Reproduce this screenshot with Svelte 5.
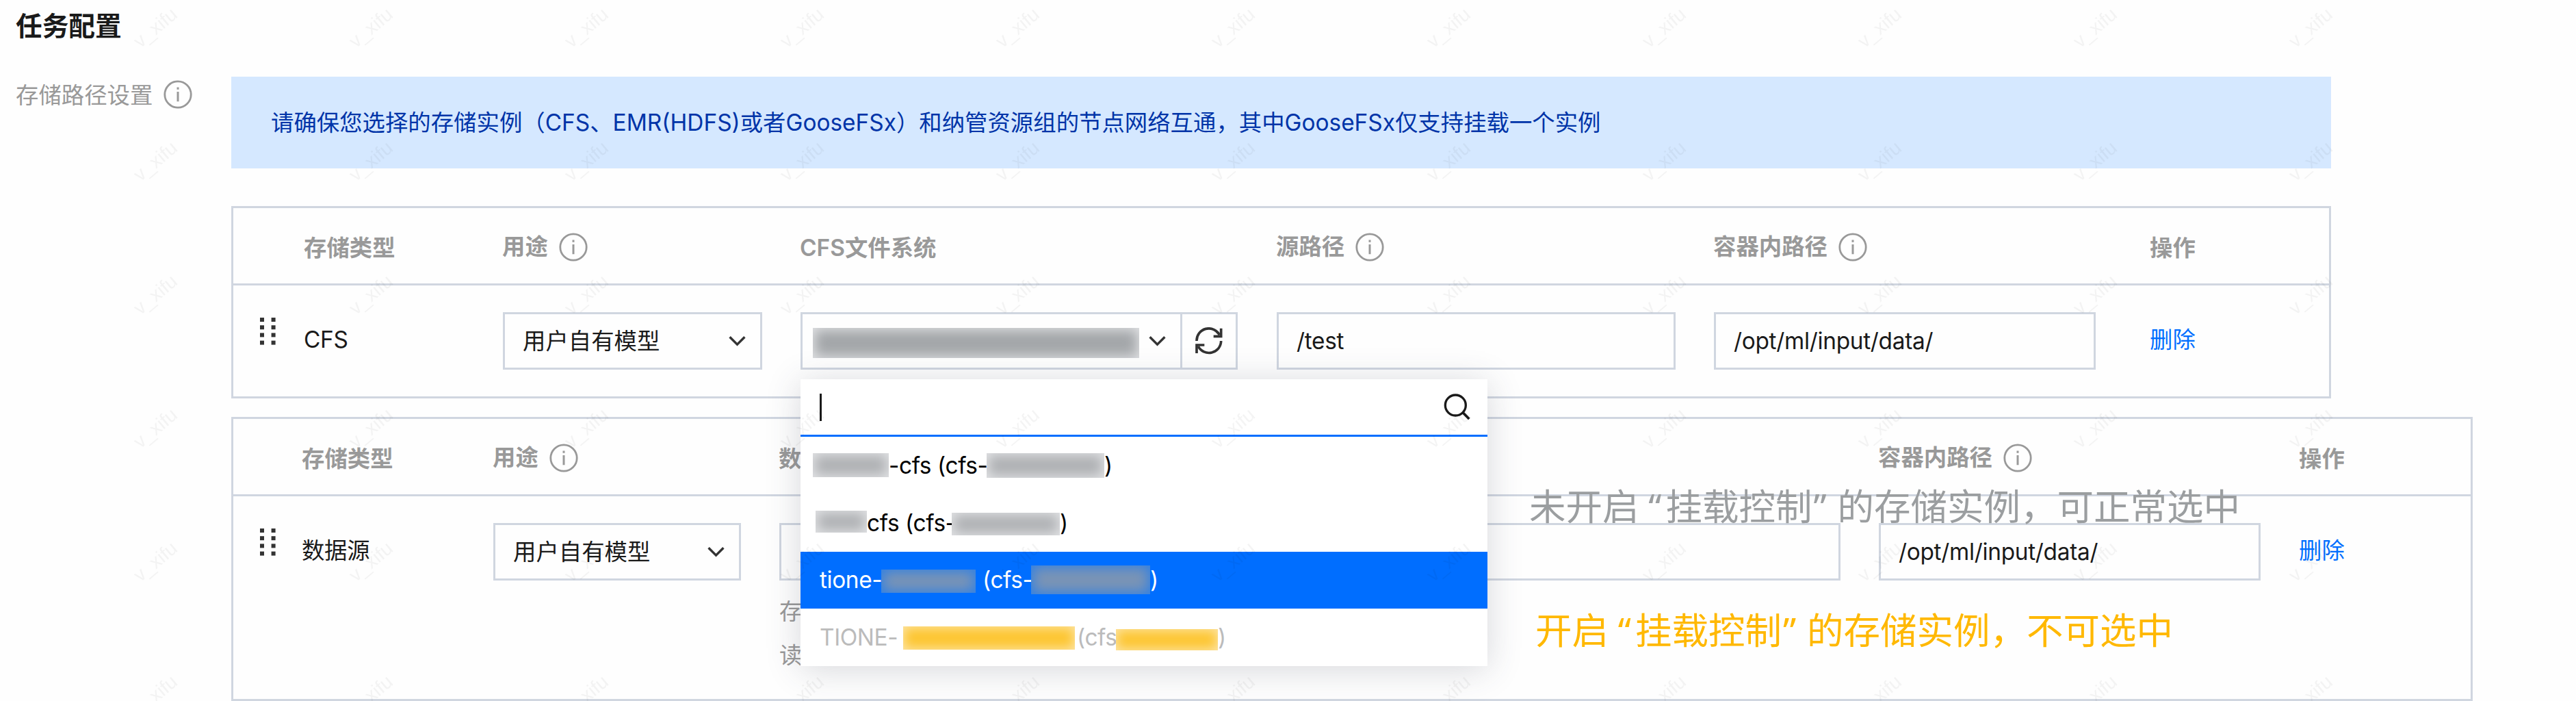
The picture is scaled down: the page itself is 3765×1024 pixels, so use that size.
<script lang="ts">
	interface Column {
		label: string;
		tip?: boolean;
	}

	interface Segment {
		width: number;
		text?: string;
		mask?: 'grey' | 'blue' | 'amber';
		height?: number;
		shift?: number;
	}

	interface Option {
		segments: Segment[];
		active?: boolean;
		disabled?: boolean;
	}

	const cfsColumns: Column[] = [
		{ label: '存储类型' },
		{ label: '用途', tip: true },
		{ label: 'CFS文件系统' },
		{ label: '源路径', tip: true },
		{ label: '容器内路径', tip: true },
		{ label: '操作' }
	];

	const sourceColumns: Column[] = [
		{ label: '存储类型' },
		{ label: '用途', tip: true },
		{ label: '数据源' },
		{ label: '容器内路径', tip: true },
		{ label: '操作' }
	];

	const options: Option[] = [
		{
			segments: [
				{ mask: 'grey', width: 111, height: 35 },
				{ text: '-cfs (cfs-', width: 143 },
				{ mask: 'grey', width: 172, height: 36 },
				{ text: ')', width: 12 }
			]
		},
		{
			segments: [
				{ width: 4 },
				{ mask: 'grey', width: 75, height: 32, shift: -2 },
				{ text: 'cfs (cfs-', width: 124 },
				{ mask: 'grey', width: 158, height: 33, shift: 2 },
				{ text: ')', width: 12 }
			]
		},
		{
			active: true,
			segments: [
				{ width: 10 },
				{ text: 'tione-', width: 90 },
				{ mask: 'blue', width: 138, height: 34, shift: 2 },
				{ width: 10 },
				{ text: '(cfs-', width: 71 },
				{ mask: 'blue', width: 174, height: 42 },
				{ text: ')', width: 12 }
			]
		},
		{
			disabled: true,
			segments: [
				{ width: 10 },
				{ text: 'TIONE-', width: 122 },
				{ mask: 'amber', width: 251, height: 34, shift: 1 },
				{ width: 3 },
				{ text: '(cfs', width: 57 },
				{ mask: 'amber', width: 149, height: 31, shift: 3 },
				{ text: ')', width: 12 }
			]
		}
	];

	let usage = $state('用户自有模型');
	let sourcePath = $state('/test');
	let cfsMountPath = $state('/opt/ml/input/data/');
	let dataMountPath = $state('/opt/ml/input/data/');
</script>

{#snippet infoIcon()}
	<svg class="info" width="42" height="42" viewBox="0 0 42 42" fill="none" stroke="currentColor">
		<circle cx="21" cy="21" r="19.2" stroke-width="2.8" />
		<path d="M21 10.5v3.2M21 17v14.3" stroke-width="3" />
	</svg>
{/snippet}

{#snippet chevron()}
	<svg class="chevron" width="25" height="16" viewBox="0 0 25 16" fill="none">
		<path d="M1.6 2.2l10.9 11 10.9-11" stroke="#333" stroke-width="3.4" />
	</svg>
{/snippet}

{#snippet grip()}
	<svg class="grip" width="23" height="40" viewBox="0 0 23 40" fill="#333">
		{#each [0, 11.2, 22.4, 33.6] as y}
			<rect x="0" {y} width="6" height="6" />
			<rect x="16.6" {y} width="6" height="6" />
		{/each}
	</svg>
{/snippet}

{#snippet heading(column: Column)}
	<div class="th" class:with-tip={column.tip}>
		<span>{column.label}</span>
		{#if column.tip}{@render infoIcon()}{/if}
	</div>
{/snippet}

<div class="page">
	<h2 class="title">任务配置</h2>

	<div class="form-item">
		<div class="form-label">
			<span>存储路径设置</span>
			{@render infoIcon()}
		</div>

		<div class="form-content">
			<div class="alert">
				请确保您选择的存储实例（CFS、EMR(HDFS)或者GooseFSx）和纳管资源组的节点网络互通，其中GooseFSx仅支持挂载一个实例
			</div>

			<section class="table cfs">
				<div class="row head">
					<div></div>
					{#each cfsColumns as column}
						{@render heading(column)}
					{/each}
				</div>
				<div class="row body">
					<div class="td">{@render grip()}</div>
					<div class="td plain">CFS</div>
					<div class="td">
						<button class="select">
							<span>{usage}</span>
							{@render chevron()}
						</button>
					</div>
					<div class="td">
						<div class="combo">
							<button class="select instance" aria-label="CFS文件系统">
								<span class="mask grey current"></span>
								{@render chevron()}
							</button>
							<button class="refresh" aria-label="刷新">
								<svg width="40" height="40" viewBox="0 0 120 120" fill="none" stroke="#333" stroke-width="11">
									<path d="M6 60A53 53 0 0 1 106 34" />
									<path d="M80 40H113V5" />
									<path d="M113 60A53 53 0 0 1 13 84" />
									<path d="M40 78H6V114" />
								</svg>
							</button>

							<div class="dropdown">
								<div class="search">
									<span class="caret"></span>
									<svg width="39" height="39" viewBox="0 0 117 117" fill="none" stroke="#1a1a1a">
										<circle cx="52" cy="51" r="45" stroke-width="10" />
										<path d="M84 83l28 28" stroke-width="11" />
									</svg>
								</div>
								{#each options as option}
									<div class="option" class:active={option.active} class:disabled={option.disabled}>
										{#each option.segments as seg}
											{#if seg.mask}
												<span
													class="mask {seg.mask}"
													style="width: {seg.width}px; height: {seg.height}px; margin-top: {(seg.shift ?? 0) * 2}px"
												></span>
											{:else}
												<span class="seg" style="width: {seg.width}px">{seg.text ?? ''}</span>
											{/if}
										{/each}
									</div>
								{/each}
							</div>
						</div>
					</div>
					<div class="td"><div class="input source">{sourcePath}</div></div>
					<div class="td"><div class="input mount">{cfsMountPath}</div></div>
					<div class="td plain"><button class="link">删除</button></div>
				</div>
			</section>

			<section class="table data">
				<div class="row head">
					<div></div>
					{#each sourceColumns as column}
						{@render heading(column)}
					{/each}
				</div>
				<div class="row body">
					<div class="td">{@render grip()}</div>
					<div class="td plain">数据源</div>
					<div class="td">
						<button class="select">
							<span>{usage}</span>
							{@render chevron()}
						</button>
					</div>
					<div class="td stacked">
						<div class="input wide"></div>
						<p class="help">存储源仅支持选择<br />读写权限，可修改</p>
					</div>
					<div class="td"><div class="input mount">{dataMountPath}</div></div>
					<div class="td plain"><button class="link">删除</button></div>
				</div>
			</section>
		</div>
	</div>

	<p class="note normal">
		未开启<span class="quote open">“</span>挂载控制<span class="quote">”</span>的存储实例，可正常选中
	</p>
	<p class="note locked">
		开启<span class="quote open">“</span>挂载控制<span class="quote">”</span>的存储实例，不可选中
	</p>

	<svg class="watermark" width="3500" height="1024" aria-hidden="true">
		<defs>
			<pattern id="wm" width="315" height="195" patternUnits="userSpaceOnUse">
				<text transform="translate(205 71) rotate(-40)">v_xifu</text>
			</pattern>
		</defs>
		<rect width="3500" height="1024" fill="url(#wm)" />
	</svg>
</div>

<style>
	:global(body) {
		background: #fefefe;
	}

	.page {
		--line: #d0d6e0;
		--muted: #999;
		--blue: #006eff;
		position: relative;
		width: 3765px;
		height: 1024px;
		overflow: hidden;
		box-sizing: border-box;
		padding-left: 23px;
		font-family: Inter, 'Noto Sans CJK SC', sans-serif;
		font-size: 33.4px;
		color: #1a1a1a;
	}

	.page * {
		box-sizing: border-box;
	}

	button {
		font: inherit;
		color: inherit;
		background: transparent;
		border: none;
		padding: 0;
	}

	.title {
		height: 74px;
		margin: 0 0 37px;
		line-height: 76px;
		font-size: 38.7px;
		font-weight: 700;
	}

	.form-item {
		display: flex;
	}

	.form-label {
		display: flex;
		align-items: center;
		gap: 16px;
		flex: 0 0 315px;
		height: 53px;
		color: var(--muted);
	}

	.form-label span {
		margin-top: -3px;
	}

	.form-content {
		padding-top: 1px;
	}

	.alert {
		width: 3069px;
		height: 134px;
		padding-left: 58px;
		line-height: 134px;
		background: #d5e8ff;
		color: #0034a8;
		white-space: nowrap;
	}

	.table {
		border: 3px solid var(--line);
	}

	.table.cfs {
		width: 3069px;
		height: 281px;
		margin-top: 55px;
	}

	.table.data {
		width: 3276px;
		height: 415px;
		margin-top: 27px;
	}

	.row {
		display: grid;
		padding-left: 39px;
	}

	.cfs .row {
		grid-template-columns: 65px 290px 435px 696px 639px 638px 1fr;
	}

	.data .row {
		grid-template-columns: 62px 279px 418px 1607px 615px 1fr;
	}

	.head {
		height: 113px;
		border-bottom: 3px solid var(--line);
		color: var(--muted);
		font-weight: 600;
	}

	.th {
		display: flex;
		align-items: center;
		gap: 16px;
		margin-left: -1px;
		white-space: nowrap;
	}

	.th.with-tip {
		padding-top: 4px;
	}

	.th.with-tip span {
		margin-top: -8px;
	}

	.body {
		padding-top: 39px;
	}

	.td {
		display: flex;
		height: 84px;
		line-height: 80px;
		white-space: nowrap;
	}

	.td.plain {
		margin-left: -1px;
		letter-spacing: -0.3px;
	}

	.td.stacked {
		flex-direction: column;
		height: auto;
	}

	.grip {
		margin-top: 8px;
	}

	.select,
	.input {
		display: flex;
		align-items: center;
		height: 84px;
		padding: 0 21px 0 26px;
		border: 3px solid var(--line);
	}

	.input {
		letter-spacing: -0.3px;
	}

	.select {
		justify-content: space-between;
		width: 379px;
	}

	.data .select {
		width: 362px;
	}

	.combo {
		position: relative;
		display: flex;
		width: 639px;
	}

	.select.instance {
		width: 558px;
		padding-left: 15px;
	}

	.refresh {
		display: flex;
		align-items: center;
		justify-content: center;
		width: 84px;
		height: 84px;
		margin-left: -3px;
		border: 3px solid var(--line);
	}

	.input.source {
		width: 583px;
	}

	.input.mount {
		width: 558px;
	}

	.input.wide {
		width: 1551px;
	}

	.help {
		margin: 13px 0 0 0;
		line-height: 64px;
		color: var(--muted);
	}

	.link {
		height: 80px;
		color: var(--blue);
	}

	.dropdown {
		position: absolute;
		top: 98px;
		left: 0;
		z-index: 2;
		width: 1004px;
		height: 419px;
		background: #fff;
		box-shadow: 0 5px 48px rgba(54, 58, 80, 0.2);
		line-height: 84px;
		letter-spacing: -0.4px;
	}

	.search {
		display: flex;
		align-items: center;
		justify-content: space-between;
		height: 84px;
		padding: 0 25px 0 28px;
		border-bottom: 3px solid var(--blue);
	}

	.caret {
		width: 3px;
		height: 40px;
		background: #1a1a1a;
	}

	.option {
		display: flex;
		align-items: center;
		height: 83.75px;
		padding-left: 18px;
		color: #000;
	}

	.option.active {
		background: var(--blue);
		color: #fff;
	}

	.option.disabled {
		color: #bbb;
	}

	.seg {
		flex: none;
		white-space: pre;
	}

	.mask {
		flex: none;
	}

	.mask.grey {
		background: #aeb0b3;
		box-shadow: inset 0 0 18px 3px #e3e4e6;
	}

	.mask.blue {
		background: #7b94b5;
		box-shadow: inset 0 0 18px 3px #3080e4;
	}

	.mask.amber {
		background: #fdc632;
		box-shadow: inset 0 0 16px 2px #fde6ab;
	}

	.mask.current {
		width: 477px;
		height: 44px;
		margin-top: 6px;
		background: #a3a6a9;
	}

	/* callouts drawn over the tables */
	.note {
		position: absolute;
		z-index: 1;
		margin: 0;
		font-family: 'Noto Sans CJK SC', sans-serif;
		font-size: 53.5px;
		line-height: 80px;
		white-space: nowrap;
	}

	.note.normal {
		left: 2235px;
		top: 697px;
		color: #9b9ea0;
	}

	.note.locked {
		left: 2244px;
		top: 878px;
		color: #ffb800;
	}

	.quote {
		display: inline-block;
		width: 37px;
		padding-left: 2px;
		font-family: 'Noto Sans', sans-serif;
	}

	.quote.open {
		width: 39px;
		padding: 0 6px 0 0;
		text-align: right;
	}

	.watermark {
		position: absolute;
		top: 0;
		left: 0;
		z-index: 3;
		pointer-events: none;
	}

	.watermark text {
		font-family: 'Liberation Sans', Arial, sans-serif;
		font-size: 28px;
		fill: rgba(0, 0, 0, 0.042);
	}
</style>
